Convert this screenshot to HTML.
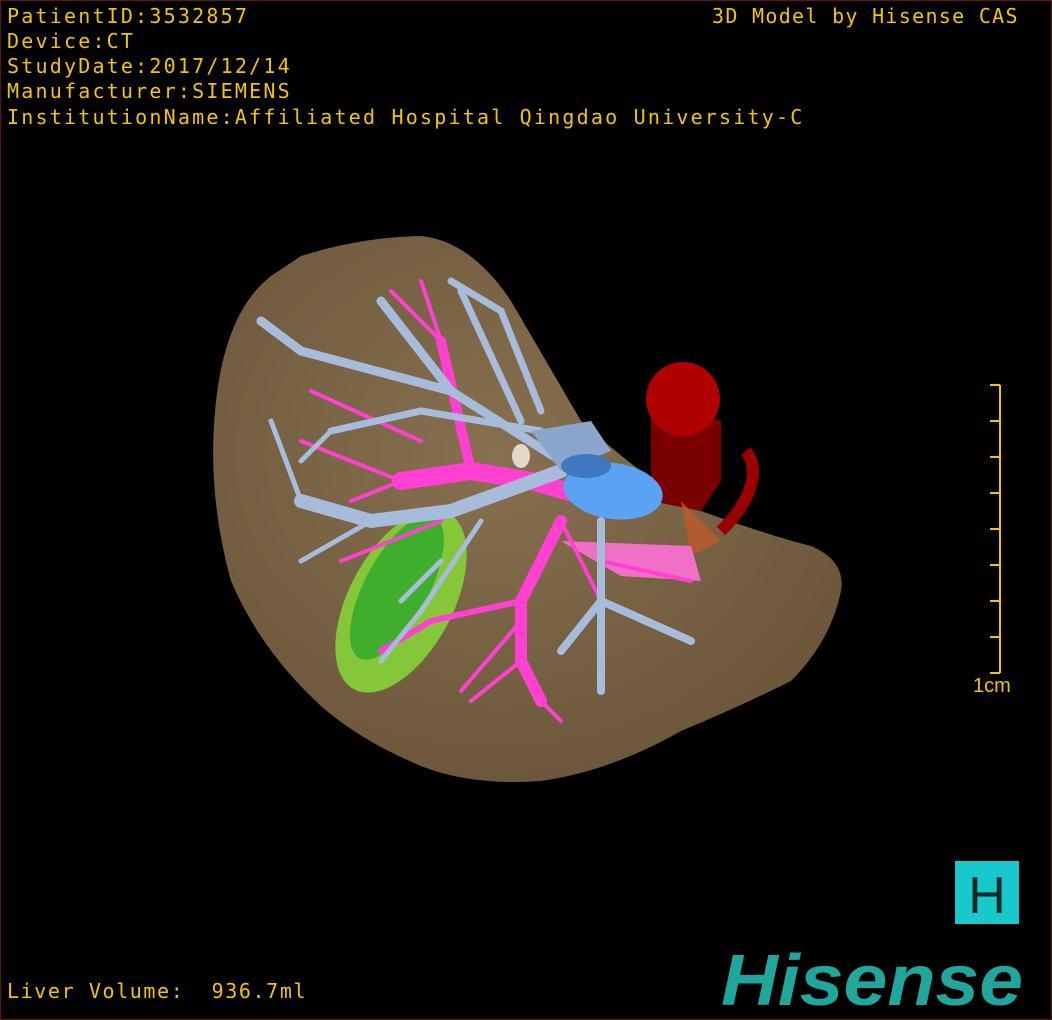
<!DOCTYPE html>
<html><head><meta charset="utf-8"><style>
html,body{margin:0;padding:0;background:#000;}
#f{position:relative;width:1052px;height:1020px;background:#000;overflow:hidden;box-sizing:border-box;border:1px solid #6a1010;}
.t{position:absolute;left:6px;color:#f2c500;font-family:"DejaVu Sans Mono","Liberation Mono",monospace;font-size:20px;line-height:25px;white-space:pre;letter-spacing:2.2px}
</style></head><body><div id="f">
<div class="t" style="top:3px">PatientID:3532857</div>
<div class="t" style="top:28px">Device:CT</div>
<div class="t" style="top:53px">StudyDate:2017/12/14</div>
<div class="t" style="top:78px">Manufacturer:SIEMENS</div>
<div class="t" style="top:104px">InstitutionName:Affiliated Hospital Qingdao University-C</div>
<div class="t" style="top:3px;left:711px;letter-spacing:1.3px">3D Model by Hisense CAS</div>
<div class="t" style="top:978px;letter-spacing:1.6px">Liver Volume:  936.7ml</div>
<svg width="1052" height="1020" style="position:absolute;left:0;top:0">
<defs><radialGradient id="lg" cx="45%" cy="40%" r="65%"><stop offset="0" stop-color="#86704f"/><stop offset="1" stop-color="#6b563b"/></radialGradient></defs>
<path d="M300,255 Q360,236 420,235 Q470,240 510,300 Q545,360 580,420 Q640,475 700,510 Q770,535 810,545 Q845,560 840,590 Q830,640 790,680 Q740,705 680,730 Q610,770 540,780 Q470,785 420,765 Q360,740 320,705 Q260,650 230,580 Q205,490 215,400 Q225,310 270,275 Z" fill="url(#lg)"/>
<g transform="rotate(-62 400 600)"><ellipse cx="400" cy="600" rx="100" ry="52" fill="#84c83a"/><ellipse cx="410" cy="590" rx="80" ry="32" fill="#3fae2c"/></g>
<path d="M650,400 L720,420 L720,480 L700,510 L650,500 Z" fill="#7a0000"/>
<path d="M745,450 C760,470 750,500 720,530" stroke="#9a0000" stroke-width="12" fill="none"/>
<circle cx="682" cy="398" r="37" fill="#b00000"/>
<path d="M680,500 L720,540 L690,555 Z" fill="#c85a2a" opacity="0.7"/>
<path d="M560,540 L690,545 L700,580 L620,575 Z" fill="#f070c8"/>
<g stroke="#ff40d0" fill="none" stroke-linecap="round">
<path d="M600,500 L530,480 L470,470 L400,480" stroke-width="18"/>
<path d="M470,470 L440,340" stroke-width="10"/>
<path d="M560,520 L520,600 L520,660 L540,700" stroke-width="12"/>
<path d="M520,600 L430,620 L380,650" stroke-width="6"/>
<path d="M400,480 L300,440 M420,440 L310,390 M440,340 L390,290 M440,340 L420,280 M520,620 L460,690 M540,700 L560,720 M520,660 L470,700 M600,560 L690,580 M440,520 L340,560 M400,480 L350,500 M560,520 L600,600" stroke-width="4"/>
</g>
<g stroke="#a7bcda" fill="none" stroke-linecap="round">
<path d="M560,470 L450,510 L370,520 L300,500" stroke-width="14"/>
<path d="M560,460 L450,390 L380,300 M450,390 L300,350 L260,320" stroke-width="9"/>
<path d="M520,420 L460,290 M540,410 L500,310 L450,280 M540,430 L420,410 L330,430" stroke-width="7"/>
<path d="M600,520 L600,600 L600,690 M600,600 L560,650 M600,600 L690,640" stroke-width="8"/>
<path d="M480,520 L420,610 L380,660 M370,520 L300,560 M300,500 L270,420 M330,430 L300,460 M440,560 L400,600" stroke-width="5"/>
</g>
<path d="M530,430 L590,420 L610,450 L560,470 Z" fill="#8aa6cc"/>
<ellipse cx="612" cy="490" rx="50" ry="28" fill="#5aa2f2" transform="rotate(8 612 490)"/>
<ellipse cx="585" cy="465" rx="25" ry="12" fill="#3f78c0"/>
<ellipse cx="520" cy="455" rx="9" ry="12" fill="#e0d8c8"/>
<g stroke="#f2c500" stroke-width="2"><line x1="999" y1="384" x2="999" y2="672"/>
<line x1="989" y1="384" x2="999" y2="384"/><line x1="989" y1="420" x2="999" y2="420"/><line x1="989" y1="456" x2="999" y2="456"/><line x1="989" y1="492" x2="999" y2="492"/><line x1="989" y1="528" x2="999" y2="528"/><line x1="989" y1="564" x2="999" y2="564"/><line x1="989" y1="600" x2="999" y2="600"/><line x1="989" y1="636" x2="999" y2="636"/><line x1="989" y1="672" x2="999" y2="672"/></g>
<text x="972" y="691" fill="#f2c500" font-family="Liberation Sans,sans-serif" font-size="20">1cm</text>
<rect x="954" y="860" width="64" height="63" fill="#17c8cc"/>
<text x="986" y="912" fill="#0a2a2a" text-anchor="middle" font-family="Liberation Sans,sans-serif" font-size="52">H</text>
<text x="720" y="1004" fill="#1fa79b" font-family="Liberation Sans,sans-serif" font-size="72" font-weight="bold" font-style="italic" textLength="302" lengthAdjust="spacingAndGlyphs">Hisense</text>
</svg>
</div></body></html>
